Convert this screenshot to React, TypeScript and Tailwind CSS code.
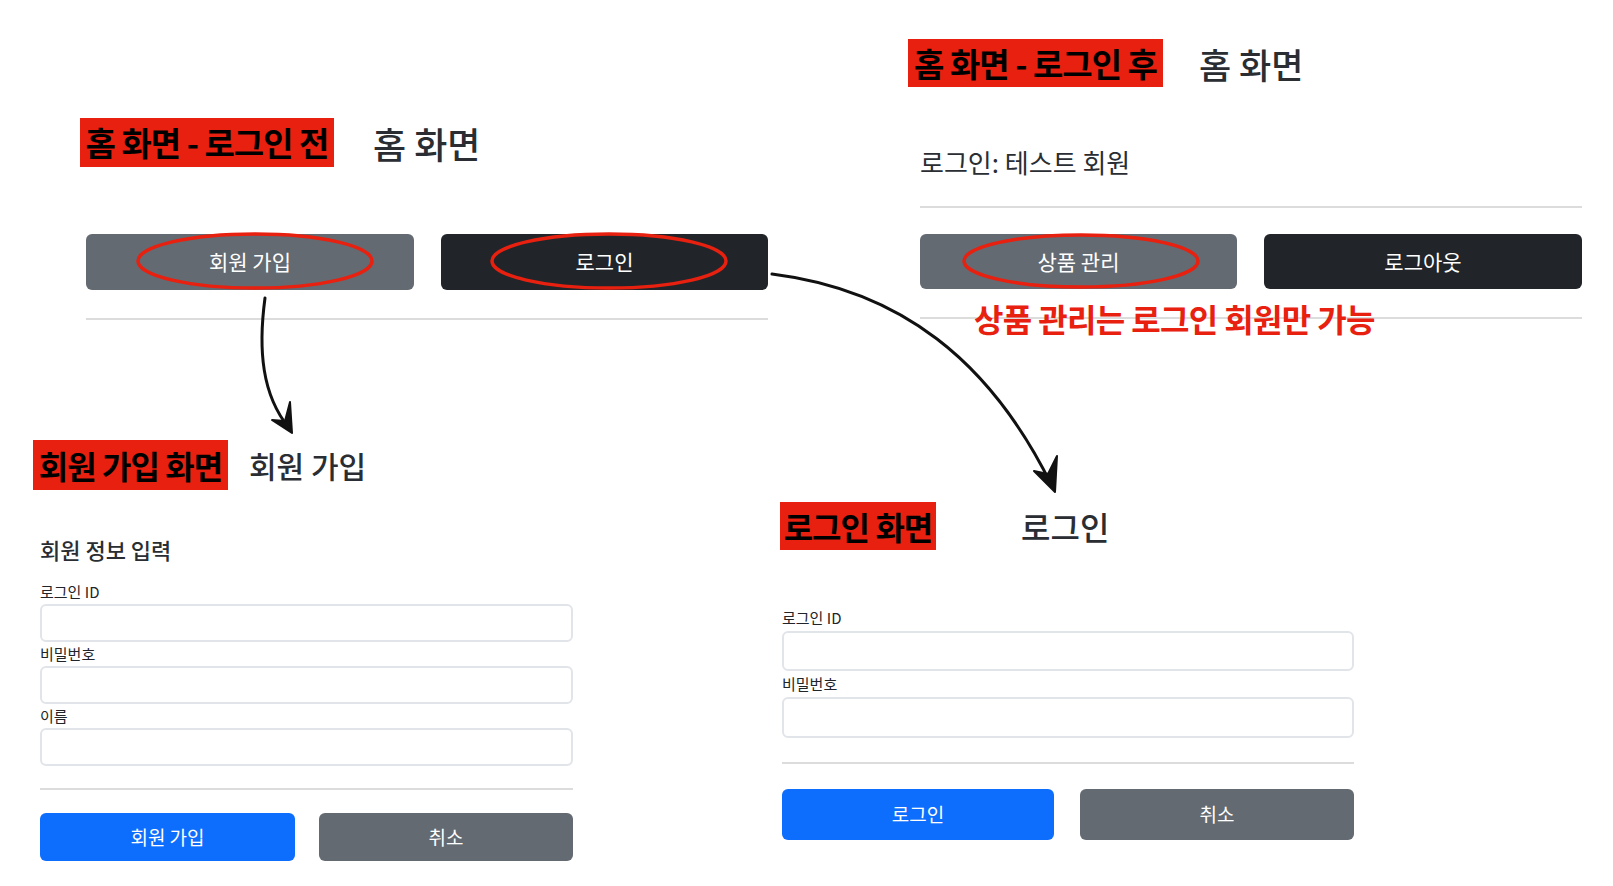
const font = "font-['Noto_Sans_CJK_KR','Noto_Sans',sans-serif]";

const Tag = ({ text, w, h, size }: { text: string; w: string; h: string; size: string }) => (
  <div className={`flex items-center justify-center bg-[#e8200f] font-bold leading-none text-black tracking-[-0.03em] ${w} ${h} ${size}`}>
    {text}
  </div>
);

const Field = ({ label, labelH, inputH }: { label: string; labelH: string; inputH: string }) => (
  <div className="flex flex-col">
    <div className={`flex items-center text-[15px] text-[#212529] ${labelH}`}>{label}</div>
    <div className={`rounded-[6px] border-2 border-[#e1e4e8] bg-white ${inputH}`} />
  </div>
);

export default function App() {
  return (
    <div className={`relative h-[886px] w-[1613px] overflow-hidden bg-white ${font}`}>
      {/* 홈 화면 - 로그인 전 */}
      <div className="absolute left-[80px] top-[118px] flex w-[688px] flex-col">
        <div className="flex h-[49px] items-center gap-[39px]">
          <Tag text="홈 화면 - 로그인 전" w="w-[254px]" h="h-[49px]" size="text-[33px]" />
          <div className="text-[36px] font-medium leading-none text-[#2a2e33]">홈 화면</div>
        </div>
        <div className="ml-[6px] mt-[67px] flex gap-[27px]">
          <div className="flex h-[56px] w-[328px] items-center justify-center rounded-[6px] bg-[#636a72] text-[21px] text-white">회원 가입</div>
          <div className="flex h-[56px] w-[327px] items-center justify-center rounded-[6px] bg-[#212529] text-[21px] text-white">로그인</div>
        </div>
        <div className="ml-[6px] mt-[28px] h-[2px] w-[682px] bg-[#dcdcdc]" />
      </div>

      {/* 홈 화면 - 로그인 후 */}
      <div className="absolute left-[908px] top-[39px] flex flex-col">
        <div className="flex h-[48px] items-center gap-[36px]">
          <Tag text="홈 화면 - 로그인 후" w="w-[255px]" h="h-[48px]" size="text-[33px]" />
          <div className="text-[35px] font-medium leading-none text-[#2a2e33]">홈 화면</div>
        </div>
        <div className="relative ml-[12px] flex w-[662px] flex-col">
          <div className="mt-[59px] flex h-[30px] items-center text-[26px] text-[#2a2e33]">로그인: 테스트 회원</div>
          <div className="mt-[30px] h-[2px] w-full bg-[#dcdcdc]" />
          <div className="mt-[26px] flex gap-[27px]">
            <div className="flex h-[55px] w-[317px] items-center justify-center rounded-[6px] bg-[#636a72] text-[21px] text-white">상품 관리</div>
            <div className="flex h-[55px] w-[318px] items-center justify-center rounded-[6px] bg-[#212529] text-[21px] text-white">로그아웃</div>
          </div>
          <div className="mt-[28px] h-[2px] w-full bg-[#dcdcdc]" />
          <div className="absolute left-[54px] top-[215px] text-[32px] font-bold leading-none tracking-[-0.02em] text-[#e8200f]">
            상품 관리는 로그인 회원만 가능
          </div>
        </div>
      </div>

      {/* 회원 가입 화면 */}
      <div className="absolute left-[33px] top-[440px] flex flex-col">
        <div className="flex h-[50px] items-center gap-[21px]">
          <Tag text="회원 가입 화면" w="w-[195px]" h="h-[50px]" size="text-[32px]" />
          <div className="text-[30px] font-medium leading-none text-[#2a2e33]">회원 가입</div>
        </div>
        <div className="ml-[7px] flex w-[533px] flex-col">
          <div className="mt-[43px] flex h-[32px] items-center text-[22px] font-medium text-[#2a2e33]">회원 정보 입력</div>
          <div className="mt-[15px] flex flex-col">
            <Field label="로그인 ID" labelH="h-[24px]" inputH="h-[38px]" />
            <Field label="비밀번호" labelH="h-[24px]" inputH="h-[38px]" />
            <Field label="이름" labelH="h-[24px]" inputH="h-[38px]" />
          </div>
          <div className="mt-[22px] h-[2px] w-full bg-[#dcdcdc]" />
          <div className="mt-[23px] flex gap-[24px]">
            <div className="flex h-[48px] w-[255px] items-center justify-center rounded-[6px] bg-[#0d6efd] text-[19px] text-white">회원 가입</div>
            <div className="flex h-[48px] w-[254px] items-center justify-center rounded-[6px] bg-[#636a72] text-[19px] text-white">취소</div>
          </div>
        </div>
      </div>

      {/* 로그인 화면 */}
      <div className="absolute left-[780px] top-[502px] flex flex-col">
        <div className="flex h-[48px] items-center gap-[85px]">
          <Tag text="로그인 화면" w="w-[156px]" h="h-[48px]" size="text-[32px]" />
          <div className="text-[32px] font-medium leading-none text-[#2a2e33]">로그인</div>
        </div>
        <div className="ml-[2px] flex w-[572px] flex-col">
          <div className="mt-[56px] flex flex-col">
            <Field label="로그인 ID" labelH="h-[25px]" inputH="h-[40px]" />
            <Field label="비밀번호" labelH="h-[26px]" inputH="h-[41px]" />
          </div>
          <div className="mt-[24px] h-[2px] w-full bg-[#dcdcdc]" />
          <div className="mt-[25px] flex gap-[26px]">
            <div className="flex h-[51px] w-[272px] items-center justify-center rounded-[6px] bg-[#0d6efd] text-[19px] text-white">로그인</div>
            <div className="flex h-[51px] w-[274px] items-center justify-center rounded-[6px] bg-[#636a72] text-[19px] text-white">취소</div>
          </div>
        </div>
      </div>

      {/* annotations: ellipses and arrows */}
      <svg className="pointer-events-none absolute left-0 top-0" width="1613" height="886" viewBox="0 0 1613 886">
        <g fill="none" stroke="#e8200f" strokeWidth="3.5">
          <ellipse cx="255" cy="261" rx="117" ry="27" />
          <ellipse cx="609" cy="261" rx="117" ry="27" />
          <ellipse cx="1081" cy="261" rx="117" ry="26" />
        </g>
        <g fill="none" stroke="#111" strokeWidth="3" strokeLinecap="round">
          <path d="M265 298 C258 350, 262 395, 289 428" />
          <path d="M772 274 C900 290, 990 360, 1052 486" />
        </g>
        <g fill="#111" stroke="#111" strokeWidth="2" strokeLinejoin="round">
          <path d="M292 433 L272 420 L285 421 L290 402 Z" />
          <path d="M1055 492 L1034 471 L1048 474 L1057 456 Z" />
        </g>
      </svg>
    </div>
  );
}
